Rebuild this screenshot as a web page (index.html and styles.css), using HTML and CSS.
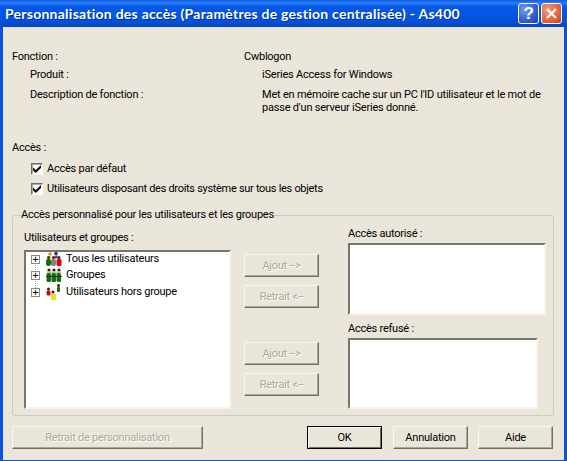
FILE: index.html
```html
<!DOCTYPE html>
<html lang="fr">
<head>
<meta charset="utf-8">
<title>Personnalisation des accès</title>
<link rel="stylesheet" href="styles.css">
</head>
<body>
<div class="window">
  <header class="titlebar">
    <span class="title">Personnalisation des accès (Paramètres de gestion centralisée) - As400</span>
    <span class="winbtn help">?</span>
    <span class="winbtn close">
      <svg width="13" height="13" viewBox="0 0 13 13"><path d="M2 2 L11 11 M11 2 L2 11" stroke="#fff" stroke-width="2.2" fill="none"/></svg>
    </span>
  </header>
  <main class="content">
    <div class="info">
      <div class="info-row lvl0"><span class="info-key">Fonction :</span><span class="info-val">Cwblogon</span></div>
      <div class="info-row lvl1"><span class="info-key">Produit :</span><span class="info-val">iSeries Access for Windows</span></div>
      <div class="info-row lvl1"><span class="info-key">Description de fonction :</span><span class="info-val">Met en mémoire cache sur un PC l'ID utilisateur et le mot de passe d'un serveur iSeries donné.</span></div>
    </div>
    <div class="access-title">Accès :</div>
    <label class="check"><span class="box"><svg width="10" height="10" viewBox="0 0 10 10"><path d="M1 3.5 L3.8 6 L9 1 V4 L3.8 9 L1 6.5 Z" fill="#111"/></svg></span>Accès par défaut</label>
    <label class="check tight"><span class="box"><svg width="10" height="10" viewBox="0 0 10 10"><path d="M1 3.5 L3.8 6 L9 1 V4 L3.8 9 L1 6.5 Z" fill="#111"/></svg></span>Utilisateurs disposant des droits système sur tous les objets</label>
    <fieldset class="group">
      <legend>Accès personnalisé pour les utilisateurs et les groupes</legend>
      <div class="col-tree">
        <div class="label">Utilisateurs et groupes :</div>
        <div class="sunken tree">
          <div class="tree-row">
            <span class="exp">+</span>
            <svg class="people" width="16" height="16" viewBox="0 0 16 16">
              <circle cx="4" cy="3" r="1.8" fill="#c8a030"/><rect x="3" y="5" width="2.5" height="3" fill="#e8d820"/>
              <circle cx="10" cy="2.5" r="1.8" fill="#303070"/><rect x="9" y="4.5" width="2.5" height="3" fill="#2040d0"/>
              <rect x="0" y="8" width="5" height="7" rx="2" fill="#107010"/><rect x="5" y="8" width="5" height="7" rx="2" fill="#808080"/><rect x="10.5" y="8" width="5" height="7" rx="1.5" fill="#e00000"/>
              <circle cx="2.5" cy="6.5" r="1.5" fill="#402010"/><circle cx="7.5" cy="6.5" r="1.5" fill="#402010"/><circle cx="13" cy="6.5" r="1.5" fill="#402010"/>
            </svg>
            <span>Tous les utilisateurs</span>
          </div>
          <div class="tree-row">
            <span class="exp">+</span>
            <svg class="people" width="16" height="16" viewBox="0 0 16 16">
              <circle cx="3" cy="3" r="1.6" fill="#402010"/><circle cx="8" cy="3" r="1.6" fill="#402010"/><circle cx="13" cy="3" r="1.6" fill="#402010"/>
              <rect x="1" y="4.5" width="14" height="2" fill="#b0c8a0"/>
              <rect x="0.5" y="6" width="4.5" height="9" rx="1.5" fill="#107010"/><rect x="5.5" y="6" width="4.5" height="9" rx="1.5" fill="#107010"/><rect x="10.5" y="6" width="4.5" height="9" rx="1.5" fill="#107010"/>
              <path d="M0 9.5 H16" stroke="#402010" stroke-width="1"/>
            </svg>
            <span>Groupes</span>
          </div>
          <div class="tree-row last">
            <span class="exp">+</span>
            <svg class="people" width="16" height="16" viewBox="0 0 16 16">
              <circle cx="2.5" cy="5" r="1.5" fill="#402010"/><rect x="0.5" y="6.5" width="4" height="5" rx="1.5" fill="#e00000"/>
              <circle cx="7" cy="8" r="1.5" fill="#402010"/><rect x="5" y="10" width="5" height="6" rx="1" fill="#f0e020"/>
              <circle cx="12.5" cy="1.5" r="1.5" fill="#402010"/><rect x="11" y="3" width="3" height="5" rx="1" fill="#107010"/>
            </svg>
            <span>Utilisateurs hors groupe</span>
          </div>
        </div>
      </div>
      <div class="col-btns">
        <button class="btn off">Ajout --&gt;</button>
        <button class="btn off">Retrait &lt;--</button>
        <button class="btn off second">Ajout --&gt;</button>
        <button class="btn off">Retrait &lt;--</button>
      </div>
      <div class="col-lists">
        <div class="label">Accès autorisé :</div>
        <div class="sunken list-a"></div>
        <div class="label">Accès refusé :</div>
        <div class="sunken list-b"></div>
      </div>
    </fieldset>
    <footer class="actions">
      <button class="btn off wide">Retrait de personnalisation</button>
      <button class="btn default">OK</button>
      <button class="btn">Annulation</button>
      <button class="btn">Aide</button>
    </footer>
  </main>
</div>
</body>
</html>
```
FILE: styles.css
```css
* { box-sizing: border-box; }
html, body { margin: 0; padding: 0; }
body {
  width: 567px;
  height: 461px;
  overflow: hidden;
  font-family: Roboto, "Liberation Sans", Arial, sans-serif;
  font-size: 11px;
  letter-spacing: -0.24px;
  color: #000;
}
.window {
  width: 567px;
  height: 461px;
  display: flex;
  flex-direction: column;
  background: #0553e0;
  padding: 0 3px 1px 3px;
}
.titlebar {
  height: 27px;
  margin: 0 -3px;
  padding: 0 5px 0 5px;
  display: flex;
  align-items: center;
  background: linear-gradient(180deg, #0a5ce8 0%, #2a7cf5 10%, #0558e6 25%, #0453dd 75%, #0447c4 100%);
}
.title {
  flex: 1;
  color: #fff;
  font-family: Lato, sans-serif;
  font-weight: bold;
  font-size: 14px;
  letter-spacing: 0.25px;
  white-space: nowrap;
  text-shadow: 1px 1px 0 #02309a;
}
.winbtn {
  width: 21px;
  height: 21px;
  border: 1px solid #fff;
  border-radius: 3px;
  display: flex;
  align-items: center;
  justify-content: center;
}
.help {
  margin-right: 2px;
  background: radial-gradient(circle at 30% 30%, #6f9af0, #2a54c8 70%, #1c3fae);
  color: #fff;
  font-family: "Liberation Sans", sans-serif;
  font-weight: bold;
  font-size: 17px;
}
.close {
  background: radial-gradient(circle at 30% 30%, #f09a78, #df5a30 70%, #c53c1a);
}
.content {
  flex: 1;
  min-height: 0;
  padding: 23px 0 0 9px;
  line-height: 14px;
  background-color: #ebe6da;
  background-image: repeating-conic-gradient(#ede8dd 0% 25%, #e8e3d6 0% 50%);
  background-size: 2px 2px;
}
.info { display: flex; flex-direction: column; }
.info-row { display: grid; grid-template-columns: 232px 300px; }
.lvl1 { padding-left: 18px; grid-template-columns: 232px 292px; }
.lvl0 + .lvl1 { margin-top: 4px; }
.lvl1 + .lvl1 { margin-top: 6px; }
.lvl1 .info-val { line-height: 13px; letter-spacing: -0.21px; }
.access-title { margin-top: 27px; }
.check {
  display: flex;
  align-items: center;
  height: 14px;
  margin: 7px 0 0 19px;
  gap: 4px;
}
.check + .check { margin-top: 6px; }
.check.tight { letter-spacing: -0.3px; }
.box {
  width: 12px;
  height: 12px;
  background: #fff;
  border: 1px solid;
  border-color: #716f64 #fff #fff #716f64;
  box-shadow: inset 1px 1px 0 #aca899;
  display: flex;
  align-items: center;
  justify-content: center;
}
.group {
  margin: 12px 0 0 0;
  padding: 5px 0 5px 11px;
  width: 542px;
  height: 208px;
  border: 1px solid #cfcbbc;
  border-radius: 3px;
  display: flex;
  align-items: flex-start;
}
.group legend {
  padding: 0;
  margin-left: -3px;
  line-height: 14px;
}
.label { height: 14px; white-space: nowrap; }
.col-tree { width: 207px; padding-top: 4px; }
.sunken {
  background: #fff;
  border: 2px solid;
  border-color: #77766a #f7f5ee #f7f5ee #77766a;
}
.tree {
  margin-top: 5px;
  height: 159px;
  padding: 0;
  display: flex;
  flex-direction: column;
  position: relative;
}
.tree::before {
  content: "";
  position: absolute;
  left: 9px;
  top: 3px;
  height: 33px;
  border-left: 1px dotted #999;
}
.tree-row {
  height: 16px;
  display: flex;
  align-items: center;
  padding-left: 5px;
  position: relative;
}
.tree-row:first-child { margin-top: -1px; }
.tree-row.last { margin-top: 1px; }
.exp {
  width: 9px;
  height: 9px;
  margin-right: 6px;
  border: 1px solid #8a8a80;
  background: #fff;
  color: #000;
  font-size: 10px;
  line-height: 7px;
  text-align: center;
  font-family: "DejaVu Sans Mono", monospace;
  position: relative;
  z-index: 1;
}
.people { margin-right: 4px; flex: none; }
.col-btns {
  width: 75px;
  margin-left: 13px;
  padding-top: 27px;
  display: flex;
  flex-direction: column;
  gap: 8px;
}
.btn {
  height: 23px;
  width: 75px;
  padding: 0;
  background: transparent;
  font: inherit;
  letter-spacing: inherit;
  color: #000;
  border: 1px solid;
  border-color: #f7f6f1 #716f64 #716f64 #f7f6f1;
  box-shadow: inset -1px -1px 0 #aca899;
}
.btn.off {
  color: #aca899;
  text-shadow: 1px 1px 0 #fff;
}
.btn.second { margin-top: 26px; }
.col-lists { margin-left: 29px; width: 198px; }
.list-a { margin-top: 2px; height: 72px; width: 198px; margin-bottom: 7px; }
.list-b { margin-top: 2px; height: 71px; width: 190px; }
.actions {
  margin-top: 10px;
  width: 542px;
  display: flex;
  gap: 10px;
}
.btn.wide { width: 191px; margin-right: 94px; }
.btn.default {
  margin-right: 1px;
  border: 1px solid #000;
  box-shadow: inset 1px 1px 0 #f7f6f1, inset -1px -1px 0 #716f64;
}
```
